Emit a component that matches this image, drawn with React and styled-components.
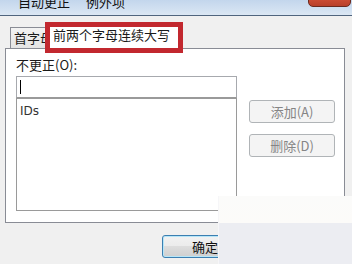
import React from "react";
import styled, { createGlobalStyle } from "styled-components";

const Global = createGlobalStyle`
  html, body { margin: 0; padding: 0; background: #f0f0f0; }
  * { box-sizing: border-box; }
`;

const FONT = `"Noto Sans CJK SC", "Noto Sans", sans-serif`;

const Window = styled.div`
  position: relative;
  width: 352px;
  height: 264px;
  overflow: hidden;
  background: #f0f0f0;
  display: flex;
  flex-direction: column;
  font-family: ${FONT};
  font-size: 13px;
  color: #1a1a1a;
`;

const TitleBar = styled.div`
  height: 16px;
  flex: none;
  display: flex;
  justify-content: space-between;
  align-items: flex-start;
  padding-left: 5px;
  overflow: hidden;
  background: linear-gradient(#c3d6ec, #dbe7f4);
  border-bottom: 1px solid #50657e;
`;

const Title = styled.div`
  margin-top: -6px;
  line-height: 16px;
  font-size: 13px;
  color: #111;
`;

const CloseButton = styled.div`
  width: 43px;
  height: 20px;
  margin-top: -13px;
  margin-right: 1px;
  border: 1px solid #6b2a20;
  border-radius: 0 0 5px 5px;
  background: linear-gradient(#e39a88, #c84a32 70%, #b8402a);
  color: #fff;
  font: bold 11px "DejaVu Sans", sans-serif;
  text-align: center;
  line-height: 16px;
`;

const Body = styled.div`
  flex: 1;
  display: flex;
  flex-direction: column;
  padding: 8px 7px 0 5px;
`;

const TabStrip = styled.div`
  height: 24px;
  display: flex;
  align-items: flex-end;
  padding-left: 5px;
  position: relative;
  z-index: 2;
`;

const Tab = styled.div`
  position: relative;
  height: ${(p) => (p.$active ? 25 : 21)}px;
  margin-bottom: ${(p) => (p.$active ? -1 : 0)}px;
  margin-left: ${(p) => (p.$active ? -2 : 0)}px;
  width: ${(p) => p.$w}px;
  padding: 0 ${(p) => (p.$active ? 4 : 3)}px;
  overflow: ${(p) => (p.$active ? "visible" : "hidden")};
  white-space: nowrap;
  border: 1px solid #898c95;
  border-bottom: none;
  background: ${(p) =>
    p.$active ? "#ffffff" : "linear-gradient(#f3f3f3, #e4e4e4)"};
  line-height: 20px;
  z-index: ${(p) => (p.$active ? 2 : 1)};
`;

const Highlight = styled.div`
  position: absolute;
  left: -4px;
  top: -3px;
  right: -3px;
  bottom: -4px;
  border: 5px solid #c2282f;
  pointer-events: none;
`;

const Panel = styled.div`
  height: 175px;
  flex: none;
  border: 1px solid #898c95;
  background: #ffffff;
  padding: 8px 9px 0 10px;
  display: grid;
  grid-template-columns: 221px 86px;
  column-gap: 12px;
  align-items: start;
`;

const FieldColumn = styled.div`
  display: flex;
  flex-direction: column;
`;

const Label = styled.div`
  line-height: 16px;
  height: 16px;
  margin-bottom: 3px;
`;

const TextInput = styled.div`
  height: 22px;
  border: 1px solid #a7a9ae;
  border-bottom-color: #9a9a9a;
  background: #fff;
  display: flex;
  align-items: center;
  padding-left: 3px;
`;

const Caret = styled.span`
  width: 1px;
  height: 14px;
  background: #000;
`;

const List = styled.div`
  height: 113px;
  border: 1px solid #9a9a9a;
  background: #fff;
  padding: 4px 3px;
`;

const ListItem = styled.div`
  line-height: 16px;
  color: #333;
  font-family: "DejaVu Sans", ${FONT};
  font-size: 12px;
`;

const ButtonColumn = styled.div`
  margin-top: 43px;
  display: flex;
  flex-direction: column;
  gap: 11px;
`;

const SideButton = styled.div`
  height: 23px;
  border: 1px solid #b0b4b7;
  border-radius: 3px;
  background: #f4f4f4;
  color: #858585;
  text-align: center;
  line-height: 21px;
  font-size: 13px;
`;

const Footer = styled.div`
  display: flex;
  gap: 6px;
  padding: 12px 0 0 157px;
`;

const DialogButton = styled.div`
  width: 86px;
  height: 23px;
  border: 1px solid ${(p) => (p.$default ? "#3c7fb1" : "#707070")};
  border-radius: 3px;
  background: linear-gradient(#f2f2f2, #ebebeb 50%, #dddddd 50%, #cfcfcf);
  box-shadow: ${(p) => (p.$default ? "inset 0 0 0 1px #b6e6f8" : "none")};
  text-align: center;
  line-height: 21px;
  font-size: 13px;
  color: #111;
`;

const Erased = styled.div`
  position: absolute;
  left: 218px;
  top: 196px;
  right: 0;
  bottom: 0;
  background: linear-gradient(#fbfbfa 0, #fcfbf9 27px, #ecedf2 27px, #ecedf2);
  border-left: 1px solid #f6f6f8;
  z-index: 5;
`;

export default function App() {
  return (
    <>
      <Global />
      <Window>
        <TitleBar>
          <Title>“自动更正” 例外项</Title>
          <CloseButton>X</CloseButton>
        </TitleBar>
        <Body>
          <TabStrip>
            <Tab $w={40}>首字母</Tab>
            <Tab $active $w={133}>
              前两个字母连续大写
              <Highlight />
            </Tab>
          </TabStrip>
          <Panel>
            <FieldColumn>
              <Label>不更正(O):</Label>
              <TextInput>
                <Caret />
              </TextInput>
              <List>
                <ListItem>IDs</ListItem>
              </List>
            </FieldColumn>
            <ButtonColumn>
              <SideButton>添加(A)</SideButton>
              <SideButton>删除(D)</SideButton>
            </ButtonColumn>
          </Panel>
          <Footer>
            <DialogButton $default>确定</DialogButton>
            <DialogButton>取消</DialogButton>
          </Footer>
        </Body>
        <Erased />
      </Window>
    </>
  );
}
